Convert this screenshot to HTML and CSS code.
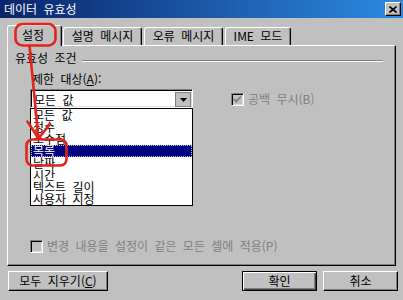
FILE: index.html
```html
<!DOCTYPE html>
<html lang="ko">

<head>
    <meta charset="UTF-8">
    <title>데이터 유효성</title>
    <link rel="stylesheet" href="styles.css">
</head>

<body>
    <div class="window">
        <div class="titlebar">
            <span class="title">데이터 유효성</span>
            <span class="close">
                <svg width="8" height="7" viewBox="0 0 8 7">
                    <path d="M0.5 0.5 L7.5 6.5 M7.5 0.5 L0.5 6.5" stroke="#000" stroke-width="1.6" fill="none" />
                </svg>
            </span>
        </div>

        <div class="tabs">
            <div class="tab tab-active">설정</div>
            <div class="tab tab-msg">설명 메시지</div>
            <div class="tab tab-err">오류 메시지</div>
            <div class="tab tab-ime">IME 모드</div>
        </div>

        <div class="panel">
            <div class="group-title">
                <span>유효성 조건</span>
                <span class="rule"></span>
            </div>
            <div class="row">
                <div class="col">
                    <div class="label">제한 대상(<u>A</u>):</div>
                    <div class="combo">
                        <span class="combo-text">모든 값</span>
                        <span class="combo-btn">
                            <svg width="7" height="4" viewBox="0 0 7 4">
                                <path d="M0 0 H7 L3.5 4 Z" fill="#000" />
                            </svg>
                        </span>
                        <ul class="droplist">
                            <li>모든 값</li>
                            <li>정수</li>
                            <li>소수점</li>
                            <li class="selected">목록</li>
                            <li>날짜</li>
                            <li>시간</li>
                            <li>텍스트 길이</li>
                            <li>사용자 지정</li>
                        </ul>
                    </div>
                </div>
                <div class="check check-blank disabled">
                    <span class="box">
                        <svg width="11" height="11" viewBox="0 0 11 11">
                            <path d="M2 5 L4.2 7.5 L9 2.5" stroke="#808080" stroke-width="1.8" fill="none" />
                        </svg>
                    </span>
                    <span>공백 무시(B)</span>
                </div>
            </div>
            <div class="check check-all disabled">
                <span class="box"></span>
                <span>변경 내용을 설정이 같은 모든 셀에 적용(P)</span>
            </div>
        </div>

        <div class="buttons">
            <button class="btn btn-clear">모두 지우기(<u>C</u>)</button>
            <span class="grow"></span>
            <button class="btn btn-default">확인</button>
            <button class="btn btn-cancel">취소</button>
        </div>

        <!-- 빨간 표시 -->
        <svg class="marks" width="403" height="300" viewBox="0 0 403 300">
            <g fill="none" stroke="#e3231c" stroke-width="2.6" stroke-linecap="round" stroke-linejoin="round">
                <rect x="15.5" y="24" width="40" height="21.5" rx="7" />
                <rect x="26.5" y="139.5" width="40" height="26" rx="6" />
                <path d="M29.5 46 L38.5 138.5 M27.5 121.5 L38.5 138.5 L50 124" />
            </g>
        </svg>
    </div>
</body>

</html>
```

FILE: styles.css
```css
* {
    box-sizing: border-box;
    margin: 0;
    padding: 0;
}

body {
    background-color: #c0c0c0;
    font-family: "Noto Sans CJK KR", "Noto Sans", sans-serif;
    font-size: 12px;
    word-spacing: 3px;
    color: #000;
}

.window {
    position: relative;
    width: 403px;
    height: 300px;
    overflow: hidden;
}

.titlebar {
    height: 18px;
    display: flex;
    align-items: center;
    justify-content: space-between;
    padding: 0 2px 0 4px;
    background: linear-gradient(to right, #0a246a, #2c8ae2);
    color: #fff;
}

.title {
    line-height: 14px;
}

.close {
    width: 16px;
    height: 14px;
    display: flex;
    align-items: center;
    justify-content: center;
    background-color: #c0c0c0;
    border: 1px solid;
    border-color: #fff #000 #000 #fff;
    box-shadow: inset -1px -1px #808080;
}

.tabs {
    display: flex;
    align-items: flex-end;
    height: 27px;
    padding: 0 7px;
}

.tab {
    height: 18px;
    line-height: 16px;
    text-align: center;
    border: 1px solid;
    border-bottom: none;
    border-color: #fff #000 #000 #fff;
    border-radius: 3px 3px 0 0;
    box-shadow: inset -1px 0 #808080;
    background-color: #c0c0c0;
}

.tab-active {
    position: relative;
    z-index: 1;
    width: 55px;
    height: 21px;
    line-height: 18px;
    margin-bottom: -1px;
    text-indent: -3px;
}

.tab-msg {
    width: 79px;
    margin-left: 1px;
}

.tab-err {
    width: 79px;
    margin-left: 2px;
}

.tab-ime {
    width: 66px;
    margin-left: 2px;
}

.panel {
    height: 221px;
    margin: 0 7px;
    display: flex;
    flex-direction: column;
    padding: 5px 12px 12px 7px;
    border: 1px solid;
    border-color: #fff #000 #000 #fff;
    box-shadow: inset -1px -1px #808080;
}

.group-title {
    display: flex;
    align-items: flex-start;
    height: 14px;
    line-height: 14px;
}

.rule {
    flex: 1;
    height: 2px;
    margin: 9px 0 0 5px;
    border-top: 1px solid #808080;
    border-bottom: 1px solid #fff;
}

.row {
    display: flex;
    align-items: flex-start;
    margin-top: 7px;
}

.col {
    margin-left: 15px;
}

.label {
    line-height: 14px;
    padding-left: 2px;
}

.combo {
    position: relative;
    width: 163px;
    height: 19px;
    margin-top: 3px;
    display: flex;
    padding: 2px;
    background-color: #fff;
    border: 1px solid;
    border-color: #808080 #fff #fff #808080;
    box-shadow: inset 1px 1px #000, inset -1px -1px #dfdfdf;
}

.combo-text {
    flex: 1;
    line-height: 15px;
    padding-left: 1px;
}

.combo-btn {
    width: 16px;
    height: 15px;
    margin-right: -1px;
    display: flex;
    align-items: center;
    justify-content: center;
    background-color: #c0c0c0;
    border: 1px solid #808080;
}

.droplist {
    position: absolute;
    z-index: 2;
    left: -1px;
    top: 18px;
    width: 163px;
    height: 98px;
    list-style: none;
    background-color: #fff;
    border: 1px solid #000;
}

.droplist li {
    height: 12px;
    line-height: 12px;
    padding-left: 2px;
    white-space: nowrap;
}

.droplist .selected {
    background-color: #000080;
    color: #fff;
    outline: 1px dotted #c0c0c0;
    outline-offset: -1px;
}

.check {
    display: flex;
    align-items: center;
    height: 14px;
    line-height: 14px;
}

.check .box {
    width: 13px;
    height: 13px;
    margin-right: 4px;
    display: flex;
    align-items: center;
    justify-content: center;
    border: 1px solid;
    border-color: #808080 #fff #fff #808080;
    box-shadow: inset 1px 1px #000, inset -1px -1px #dfdfdf;
    background-color: #c0c0c0;
}

.disabled {
    color: #808080;
}

.check-blank {
    margin: 20px 0 0 38px;
}

.check-all {
    margin: auto 0 0 15px;
}

.buttons {
    display: flex;
    margin-top: 5px;
    padding: 0 5px 0 8px;
}

.grow {
    flex: 1;
}

.btn {
    height: 20px;
    font-family: inherit;
    font-size: 12px;
    word-spacing: 3px;
    line-height: 16px;
    color: #000;
    background-color: #c0c0c0;
    border: 1px solid;
    border-color: #fff #000 #000 #fff;
    box-shadow: inset -1px -1px #808080;
}

.btn-clear {
    width: 100px;
}

.btn-default {
    width: 75px;
    border-color: #000;
    box-shadow: inset 1px 1px #fff, inset -1px -1px #404040, inset -2px -2px #808080;
}

.btn-cancel {
    width: 75px;
    margin-left: 6px;
}

.marks {
    position: absolute;
    top: 0;
    left: 0;
    pointer-events: none;
    z-index: 5;
}
```
